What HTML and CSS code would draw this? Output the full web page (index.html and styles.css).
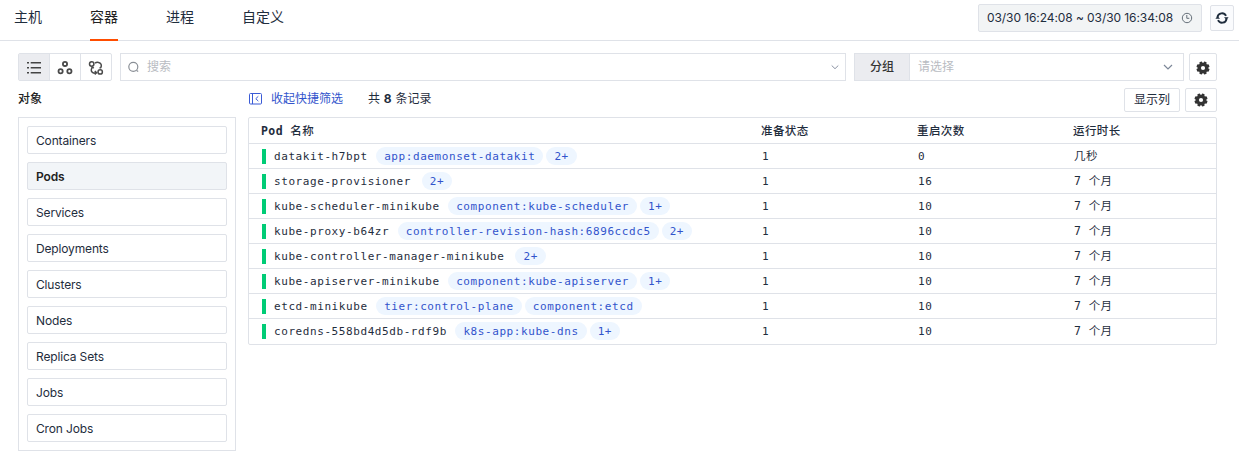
FILE: index.html
```
<!DOCTYPE html>
<html lang="zh-CN">
<head>
<meta charset="utf-8">
<title>容器</title>
<link rel="stylesheet" href="styles.css">
</head>
<body>
<svg width="0" height="0" class="defs">
  <symbol id="gear" viewBox="0 0 14 14">
    <g fill="#333" transform="rotate(22.5 7 7)">
      <rect x="5.5" y="0.4" width="3" height="13.2" rx=".7"/>
      <rect x="5.5" y="0.4" width="3" height="13.2" rx=".7" transform="rotate(45 7 7)"/>
      <rect x="5.5" y="0.4" width="3" height="13.2" rx=".7" transform="rotate(90 7 7)"/>
      <rect x="5.5" y="0.4" width="3" height="13.2" rx=".7" transform="rotate(135 7 7)"/>
      <circle cx="7" cy="7" r="5.3"/>
    </g>
    <circle cx="7" cy="7" r="2.1" fill="#fff"/>
  </symbol>
</svg>
<header class="header">
  <nav class="tabs">
    <a class="tab">主机</a><a class="tab active">容器</a><a class="tab">进程</a><a class="tab">自定义</a>
  </nav>
  <div class="time">
    <span class="time-text">03/30 16:24:08 ~ 03/30 16:34:08</span>
    <svg width="12" height="12" viewBox="0 0 12 12" fill="none" stroke="#66707a" stroke-width="1"><circle cx="6" cy="6" r="4.7"/><path d="M5.8 3v3.300h2.500"/></svg>
  </div>
  <button class="refresh">
    <svg width="14" height="14" viewBox="0 0 14 14" fill="none" stroke="#1f2d3d" stroke-width="1.900"><path d="M2.500 6.200A4.500 4.500 0 0 1 11 4.800M11.500 7.800A4.500 4.500 0 0 1 3 9.200"/><path d="M9 6.200h4.600L11.500 8.900zM5 7.800H.4L2.500 5.100z" fill="#1f2d3d" stroke="none"/></svg>
  </button>
</header>
<div class="toolbar">
  <div class="views">
    <span class="view on"><svg width="16" height="16" viewBox="0 0 16 16" fill="#444"><path d="M1 2h2v1.600H1zM1 7h2v1.600H1zM1 12h2v1.600H1zM4.700 2H15v1.600H4.700zM4.700 7H15v1.600H4.700zM4.700 12H15v1.600H4.700z"/></svg></span>
    <span class="view"><svg width="16" height="16" viewBox="0 0 16 16" fill="none" stroke="#4a4a4a" stroke-width="1.800"><circle cx="8" cy="3.900" r="2.100"/><circle cx="3.600" cy="11.300" r="2.100"/><circle cx="12.400" cy="11.300" r="2.100"/></svg></span>
    <span class="view"><svg width="16" height="16" viewBox="0 0 16 16" fill="none" stroke="#4a4a4a" stroke-width="1.500"><circle cx="3.700" cy="4" r="2.200"/><circle cx="12.200" cy="11.900" r="2.200"/><path d="M7 3.200C8 2.400 9.200 2.200 10.500 2.400c2.600.4 3.500 2.900 2.300 5.200L11.500 8M4.600 7.300c-1.700 1.500-1.800 3.800-.2 5 1.200.9 2.500.9 3.800.6M6.800 10.900l1.800 1.900-1.900 1.600M3.300 7.600l1.300-.5 1.100 1.200"/></svg></span>
  </div>
  <div class="search">
    <svg width="14" height="14" viewBox="0 0 14 14" fill="none" stroke="#8a8f96" stroke-width="1.200"><circle cx="6.300" cy="6.800" r="4.500"/><path d="M9.600 10.600l1.600 1"/></svg>
    <span class="hint grow">搜索</span>
    <svg width="8" height="8" viewBox="0 0 8 8" fill="none" stroke="#8b93a3" stroke-width="1"><path d="M.7 2.500L4 5.700l3.300-3.200"/></svg>
  </div>
  <div class="group">
    <span class="group-label">分组</span>
    <span class="hint grow">请选择</span>
    <svg width="10" height="10" viewBox="0 0 10 10" fill="none" stroke="#7c8798" stroke-width="1.200"><path d="M1 3l4 4 4-4"/></svg>
  </div>
  <button class="gear"><svg width="14" height="14"><use href="#gear"/></svg></button>
</div>
<main class="main">
  <aside class="side">
    <h2 class="side-title">对象</h2>
    <div class="side-box">
      <div class="item">Containers</div><div class="item picked">Pods</div><div class="item">Services</div><div class="item">Deployments</div><div class="item">Clusters</div><div class="item">Nodes</div><div class="item">Replica Sets</div><div class="item">Jobs</div><div class="item">Cron Jobs</div>
    </div>
  </aside>
  <section class="content">
    <div class="bar">
      <svg class="collapse" width="14" height="12" viewBox="0 0 14 12" fill="none" stroke="#3b5bd6" stroke-width="1"><rect x="1.500" y=".5" width="12" height="10.500" rx="1"/><path d="M4.500 .5v10.500M10.300 3.300L7.800 5.700l2.500 2.400"/></svg>
      <a class="link">收起快捷筛选</a>
      <span class="count">共 <b>8</b> 条记录</span>
      <button class="cols">显示列</button>
      <button class="gear wide"><svg width="14" height="14"><use href="#gear"/></svg></button>
    </div>
    <div class="table">
      <div class="row head"><div class="name"><b>Pod</b>&nbsp;名称</div><div>准备状态</div><div>重启次数</div><div>运行时长</div></div>
      <div class="row"><div class="name"><i class="mark"></i>datakit-h7bpt<span class="tags"><span class="tag">app:daemonset-datakit</span><span class="tag">2+</span></span></div><div class="num">1</div><div class="num">0</div><div>几秒</div></div>
      <div class="row"><div class="name"><i class="mark"></i>storage-provisioner<span class="tags more"><span class="tag">2+</span></span></div><div class="num">1</div><div class="num">16</div><div>7 个月</div></div>
      <div class="row"><div class="name"><i class="mark"></i>kube-scheduler-minikube<span class="tags"><span class="tag">component:kube-scheduler</span><span class="tag">1+</span></span></div><div class="num">1</div><div class="num">10</div><div>7 个月</div></div>
      <div class="row"><div class="name"><i class="mark"></i>kube-proxy-b64zr<span class="tags"><span class="tag">controller-revision-hash:6896ccdc5</span><span class="tag">2+</span></span></div><div class="num">1</div><div class="num">10</div><div>7 个月</div></div>
      <div class="row"><div class="name"><i class="mark"></i>kube-controller-manager-minikube<span class="tags more"><span class="tag">2+</span></span></div><div class="num">1</div><div class="num">10</div><div>7 个月</div></div>
      <div class="row"><div class="name"><i class="mark"></i>kube-apiserver-minikube<span class="tags"><span class="tag">component:kube-apiserver</span><span class="tag">1+</span></span></div><div class="num">1</div><div class="num">10</div><div>7 个月</div></div>
      <div class="row"><div class="name"><i class="mark"></i>etcd-minikube<span class="tags"><span class="tag">tier:control-plane</span><span class="tag">component:etcd</span></span></div><div class="num">1</div><div class="num">10</div><div>7 个月</div></div>
      <div class="row"><div class="name"><i class="mark"></i>coredns-558bd4d5db-rdf9b<span class="tags"><span class="tag">k8s-app:kube-dns</span><span class="tag">1+</span></span></div><div class="num">1</div><div class="num">10</div><div>7 个月</div></div>
    </div>
  </section>
</main>
</body>
</html>
```
FILE: styles.css
```
* { box-sizing: border-box; }
body { margin: 0; height: 458px; overflow: hidden; background: #fff; color: #1f2d3d; font: 12px/18px Inter, "Noto Sans CJK SC", sans-serif; }
.defs { display: block; }
button { display: flex; align-items: center; justify-content: center; padding: 0; border: 1px solid #dfe2e8; border-radius: 2px; background: #fff; font: inherit; color: inherit; }
svg { flex: none; }

.header { display: flex; align-items: flex-start; height: 41px; padding: 0 5px 0 14px; border-bottom: 1px solid #dfe2e8; }
.tabs { display: flex; gap: 48px; margin-right: auto; }
.tab { height: 41px; font-size: 14px; line-height: 34px; }
.tab.active { border-bottom: 2px solid #ff4d00; color: #222; }
.time { display: flex; align-items: center; width: 224px; height: 28px; margin: 4px 8px 0 0; padding: 0 8px; justify-content: space-between; border: 1px solid #dfe2e8; border-radius: 2px; background: #f2f4f5; }
.time-text { letter-spacing: -.08px; white-space: nowrap; }
.refresh { width: 24px; height: 26px; margin-top: 5px; background: #fafbfd; }

.toolbar { display: flex; height: 28px; margin: 12px 22px 0 18px; }
.views { display: flex; width: 94px; margin-right: 8px; border: 1px solid #dfe2e8; border-radius: 2px; }
.view { display: flex; flex: 1; align-items: center; justify-content: center; padding-top: 2px; }
.view + .view { border-left: 1px solid #dfe2e8; }
.view.on { background: #ebecf0; }
.search { display: flex; align-items: center; width: 726px; margin-right: 8px; padding: 0 6px; border: 1px solid #dfe2e8; }
.hint { padding-left: 6px; color: #b9bcc2; }
.grow { flex: 1; }
.group { display: flex; align-items: center; width: 330px; margin-right: 5px; padding-right: 10px; border: 1px solid #dfe2e8; }
.group-label { width: 55px; height: 26px; margin-right: 2px; border-right: 1px solid #dfe2e8; background: #ebecf0; line-height: 26px; text-align: center; font-weight: 500; color: #333; }
.gear { width: 28px; height: 28px; padding-top: 2px; }
.gear.wide { width: 32px; height: 24px; padding: 0; }

.main { display: flex; gap: 12px; padding: 0 22px 0 18px; }
.side { width: 218px; }
.side-title { height: 36px; margin: 0; font-size: 12px; line-height: 35px; font-weight: 500; color: #222; }
.side-box { display: flex; flex-direction: column; gap: 8px; height: 334px; padding: 8px; border: 1px solid #dfe2e8; }
.item { height: 28px; padding-left: 8px; border: 1px solid #dfe2e8; border-radius: 2px; line-height: 28px; letter-spacing: -.15px; }
.item.picked { background: #f2f5f8; font-weight: 600; color: #222; }

.content { width: 969px; }
.bar { display: flex; align-items: center; height: 36px; }
.collapse { margin-right: 9px; }
.link { margin-right: 25px; color: #3254cc; }
.count { margin-right: auto; word-spacing: .4px; }
.cols { width: 56px; height: 24px; margin-right: 5px; }
.bar .cols, .bar .wide { margin-top: 2px; }
.table { height: 228px; border: 1px solid #dfe2e8; border-radius: 2px; font: 11px/24px "DejaVu Sans Mono", "Noto Sans CJK SC", monospace; letter-spacing: .58px; }
.row { display: grid; grid-template-columns: 513px 156px 156px 1fr; grid-template-rows: 24px; height: 25px; border-bottom: 1px solid #dfe2e8; }
.row:last-child { height: 24px; border-bottom: 0; }
.row.head { grid-template-rows: 25px; height: 26px; line-height: 26px; font-weight: 500; }
.row.head > div { position: relative; left: -1px; }
.row.head, .row > div:last-child { font-size: 11.5px; letter-spacing: .4px; }
.name { display: flex; align-items: center; padding-left: 13px; white-space: nowrap; }
.row:not(.head) .name { padding-top: 2px; }
.num { padding-top: 1px; }
.mark { width: 4px; height: 15px; margin: -2px 8px 0 0; background: #00cc76; }
.tags { display: flex; gap: 3px; margin: -2px 0 0 8.500px; }
.tags.more { margin-left: 11px; }
.tag { height: 18px; padding: 0 8px; border-radius: 9px; background: #eef6ff; color: #3254cc; line-height: 20px; }
```
